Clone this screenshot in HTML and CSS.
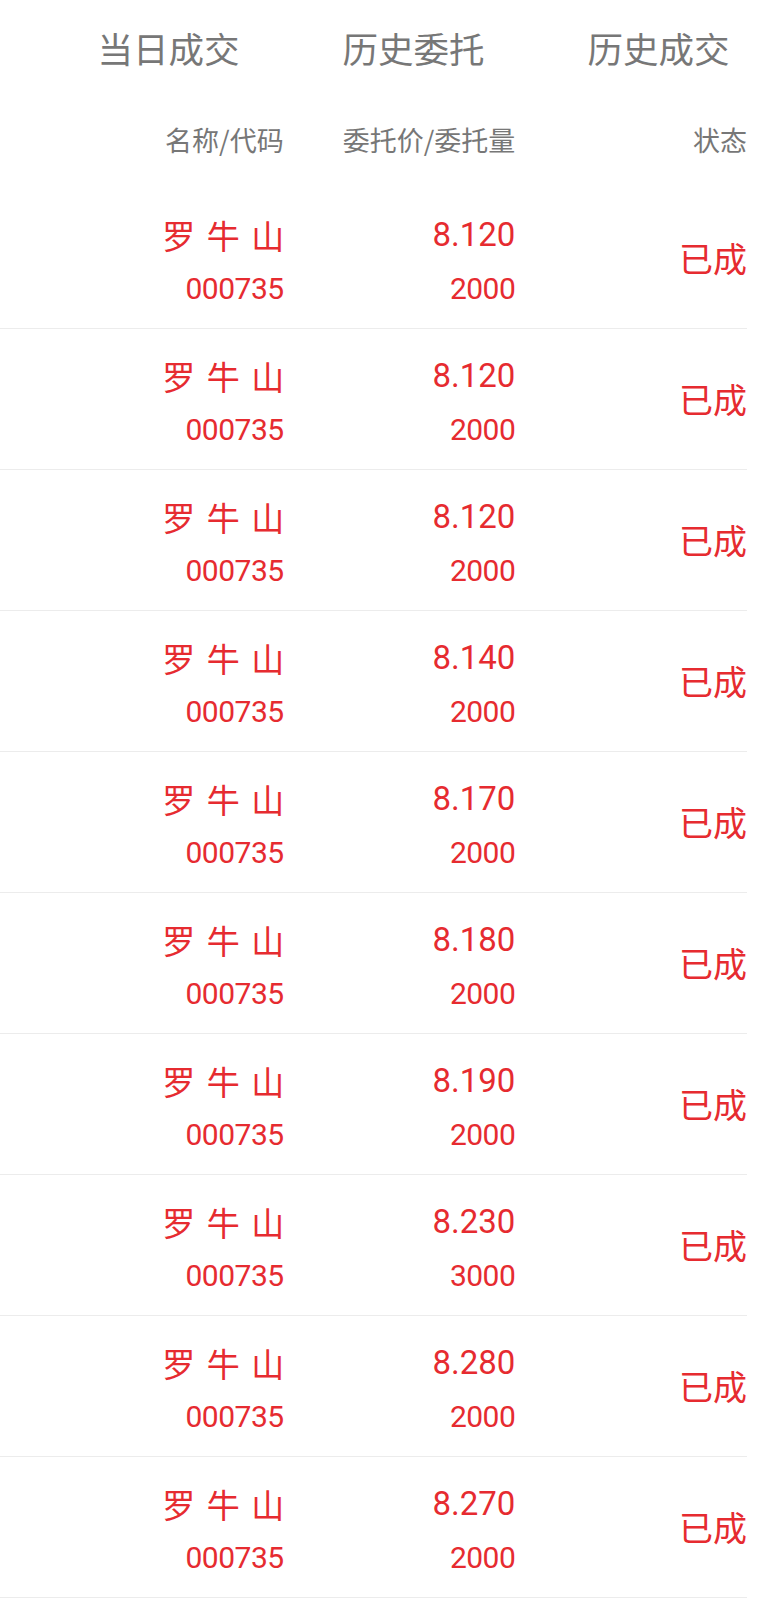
FILE: index.html
```html
<!DOCTYPE html>
<html lang="zh-CN">
<head>
    <meta charset="UTF-8">
    <meta name="viewport" content="width=device-width, initial-scale=1.0">
    <title>当日成交</title>
    <link rel="stylesheet" href="styles.css">
</head>
<body>
    <div class="page">
        <div class="tabs">
            <div class="tab">当日成交</div>
            <div class="tab">历史委托</div>
            <div class="tab">历史成交</div>
        </div>

        <div class="cols head">
            <div>名称/代码</div>
            <div>委托价/委托量</div>
            <div>状态</div>
        </div>

        <ul class="list">
            <li class="cols row">
                <div class="cell"><span class="name">罗牛山</span><span class="code">000735</span></div>
                <div class="cell"><span class="price">8.120</span><span class="qty">2000</span></div>
                <div class="status">已成</div>
            </li>
            <li class="cols row">
                <div class="cell"><span class="name">罗牛山</span><span class="code">000735</span></div>
                <div class="cell"><span class="price">8.120</span><span class="qty">2000</span></div>
                <div class="status">已成</div>
            </li>
            <li class="cols row">
                <div class="cell"><span class="name">罗牛山</span><span class="code">000735</span></div>
                <div class="cell"><span class="price">8.120</span><span class="qty">2000</span></div>
                <div class="status">已成</div>
            </li>
            <li class="cols row">
                <div class="cell"><span class="name">罗牛山</span><span class="code">000735</span></div>
                <div class="cell"><span class="price">8.140</span><span class="qty">2000</span></div>
                <div class="status">已成</div>
            </li>
            <li class="cols row">
                <div class="cell"><span class="name">罗牛山</span><span class="code">000735</span></div>
                <div class="cell"><span class="price">8.170</span><span class="qty">2000</span></div>
                <div class="status">已成</div>
            </li>
            <li class="cols row">
                <div class="cell"><span class="name">罗牛山</span><span class="code">000735</span></div>
                <div class="cell"><span class="price">8.180</span><span class="qty">2000</span></div>
                <div class="status">已成</div>
            </li>
            <li class="cols row">
                <div class="cell"><span class="name">罗牛山</span><span class="code">000735</span></div>
                <div class="cell"><span class="price">8.190</span><span class="qty">2000</span></div>
                <div class="status">已成</div>
            </li>
            <li class="cols row">
                <div class="cell"><span class="name">罗牛山</span><span class="code">000735</span></div>
                <div class="cell"><span class="price">8.230</span><span class="qty">3000</span></div>
                <div class="status">已成</div>
            </li>
            <li class="cols row">
                <div class="cell"><span class="name">罗牛山</span><span class="code">000735</span></div>
                <div class="cell"><span class="price">8.280</span><span class="qty">2000</span></div>
                <div class="status">已成</div>
            </li>
            <li class="cols row">
                <div class="cell"><span class="name">罗牛山</span><span class="code">000735</span></div>
                <div class="cell"><span class="price">8.270</span><span class="qty">2000</span></div>
                <div class="status">已成</div>
            </li>
        </ul>
    </div>
</body>
</html>
```

FILE: styles.css
```css
html, body {
    margin: 0;
    background: #fff;
    overflow-x: hidden;
}
body {
    font-family: "Noto Sans CJK SC", "Noto Sans", sans-serif;
    color: #e62b30;
}
.page {
    width: 747px;
}
.tabs {
    display: grid;
    grid-template-columns: repeat(3, 245px);
    padding-left: 46px;
    height: 96px;
    align-items: center;
    text-align: center;
    font-size: 35.5px;
    line-height: 40px;
    color: #777;
}
.cols {
    display: grid;
    grid-template-columns: repeat(3, 1fr);
    padding-left: 52px;
    text-align: right;
}
.head {
    box-sizing: border-box;
    height: 92px;
    padding-bottom: 5px;
    align-items: center;
    font-size: 27px;
    line-height: 32px;
    color: #777;
}
.list {
    list-style: none;
    margin: 0;
    padding: 0;
}
.row {
    height: 140px;
    border-bottom: 1px solid #ececec;
}
.cell {
    display: flex;
    flex-direction: column;
    align-items: flex-end;
    padding-top: 22px;
}
.name {
    font-size: 33px;
    line-height: 50px;
    letter-spacing: 11.5px;
    margin-right: -12px;
}
.code, .qty, .price {
    font-family: Roboto, "Liberation Sans", sans-serif;
}
.code, .qty {
    font-size: 30px;
    line-height: 58px;
    letter-spacing: -0.5px;
}
.price {
    font-size: 33px;
    line-height: 50px;
}
.status {
    align-self: center;
    font-size: 34px;
    line-height: 40px;
}
```
